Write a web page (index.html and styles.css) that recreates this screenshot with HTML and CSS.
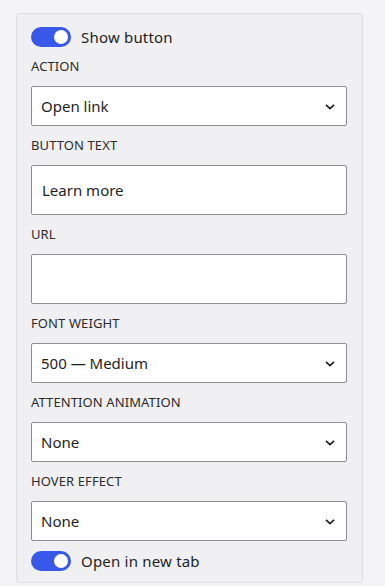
FILE: index.html
```html
<!DOCTYPE html>
<html>
<head>
<meta charset="utf-8">
<link rel="stylesheet" href="styles.css">
</head>
<body>
<div class="card">
  <label class="toggle-row">
    <span class="toggle"><span class="knob"></span></span>
    <span class="toggle-text">Show button</span>
  </label>

  <div class="group">
    <div class="label">ACTION</div>
    <div class="select"><span>Open link</span><svg class="chev" viewBox="0 0 10 6" width="10" height="6"><path d="M1 0.9 L5 4.6 L9 0.9" fill="none" stroke="#1e1e1e" stroke-width="1.7"/></svg></div>
  </div>

  <div class="group">
    <div class="label">BUTTON TEXT</div>
    <div class="input">Learn more</div>
  </div>

  <div class="group">
    <div class="label">URL</div>
    <div class="input"></div>
  </div>

  <div class="group">
    <div class="label">FONT WEIGHT</div>
    <div class="select"><span>500 — Medium</span><svg class="chev" viewBox="0 0 10 6" width="10" height="6"><path d="M1 0.9 L5 4.6 L9 0.9" fill="none" stroke="#1e1e1e" stroke-width="1.7"/></svg></div>
  </div>

  <div class="group">
    <div class="label">ATTENTION ANIMATION</div>
    <div class="select"><span>None</span><svg class="chev" viewBox="0 0 10 6" width="10" height="6"><path d="M1 0.9 L5 4.6 L9 0.9" fill="none" stroke="#1e1e1e" stroke-width="1.7"/></svg></div>
  </div>

  <div class="group">
    <div class="label">HOVER EFFECT</div>
    <div class="select"><span>None</span><svg class="chev" viewBox="0 0 10 6" width="10" height="6"><path d="M1 0.9 L5 4.6 L9 0.9" fill="none" stroke="#1e1e1e" stroke-width="1.7"/></svg></div>
  </div>

  <label class="toggle-row">
    <span class="toggle"><span class="knob"></span></span>
    <span class="toggle-text">Open in new tab</span>
  </label>
</div>
</body>
</html>
```

FILE: styles.css
```css
html, body {
  margin: 0;
  padding: 0;
  background: #f4f4f6;
}
body {
  padding: 13px 0 0 16px;
  font-family: "Noto Sans", "Open Sans", sans-serif;
  color: #1e1e1e;
}
.card {
  box-sizing: border-box;
  width: 347px;
  height: 570px;
  background: #f0f0f2;
  border: 1px solid #dcdce0;
  border-radius: 4px;
  padding: 13px 14px 0 14px;
  display: flex;
  flex-direction: column;
  gap: 10px;
}
.toggle-row {
  display: flex;
  align-items: center;
  gap: 10px;
  height: 20px;
}
.toggle {
  box-sizing: border-box;
  width: 40px;
  height: 20px;
  border-radius: 10px;
  background: #3858e9;
  display: flex;
  align-items: center;
  justify-content: flex-end;
  padding-right: 3px;
}
.knob {
  width: 14px;
  height: 14px;
  border-radius: 50%;
  background: #fff;
}
.toggle-text {
  font-size: 15px;
  letter-spacing: 0.2px;
  color: #1e1e1e;
}
.group {
  display: flex;
  flex-direction: column;
}
.label {
  font-size: 13px;
  letter-spacing: 0.1px;
  line-height: 18px;
  height: 18px;
  color: #2c2c2c;
  margin-bottom: 11px;
}
.select, .input {
  box-sizing: border-box;
  width: 316px;
  background: #fff;
  border: 1px solid #8c8f94;
  border-radius: 2px;
  font-size: 15px;
  color: #1e1e1e;
  display: flex;
  align-items: center;
}
.select {
  height: 40px;
  padding: 0 11px 0 9px;
  justify-content: space-between;
}
.input {
  height: 50px;
  padding: 0 10px;
}
.chev {
  display: block;
  margin-top: 2px;
}
```
